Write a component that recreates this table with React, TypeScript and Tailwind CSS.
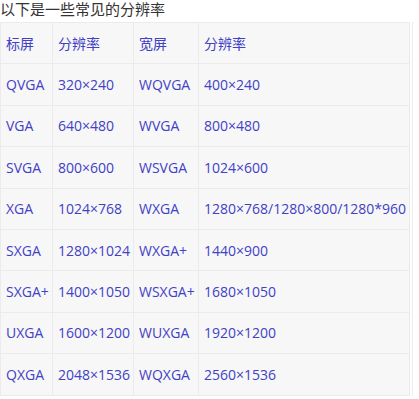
const ROWS: [string, string, string, string][] = [
  ["QVGA", "320×240", "WQVGA", "400×240"],
  ["VGA", "640×480", "WVGA", "800×480"],
  ["SVGA", "800×600", "WSVGA", "1024×600"],
  ["XGA", "1024×768", "WXGA", "1280×768/1280×800/1280*960"],
  ["SXGA", "1280×1024", "WXGA+", "1440×900"],
  ["SXGA+", "1400×1050", "WSXGA+", "1680×1050"],
  ["UXGA", "1600×1200", "WUXGA", "1920×1200"],
  ["QXGA", "2048×1536", "WQXGA", "2560×1536"],
];

const cell = "h-[41.4px] border border-[#ebebeb] pl-[5px] pr-1 text-left align-middle font-normal whitespace-nowrap";

export default function App() {
  return (
    <div className="min-h-screen bg-white font-['Open_Sans','Noto_Sans_CJK_SC',sans-serif] text-[14px]">
      <p className="h-[22px] text-[15px] leading-[18px] text-[#333]">以下是一些常见的分辨率</p>
      <div className="w-[413px] border-r border-[#ededed]">
        <table className="w-[410px] table-fixed border-collapse bg-[#f7f7f7] text-[#4141c6]">
          <colgroup>
            <col className="w-[52px]" />
            <col className="w-[81px]" />
            <col className="w-[65px]" />
            <col />
          </colgroup>
          <thead>
            <tr>
              <th className={cell}>标屏</th>
              <th className={cell}>分辨率</th>
              <th className={cell}>宽屏</th>
              <th className={cell}>分辨率</th>
            </tr>
          </thead>
          <tbody>
            {ROWS.map((r) => (
              <tr key={r[0]}>
                {r.map((v, i) => (
                  <td key={i} className={cell}>
                    {v}
                  </td>
                ))}
              </tr>
            ))}
          </tbody>
        </table>
      </div>
    </div>
  );
}
